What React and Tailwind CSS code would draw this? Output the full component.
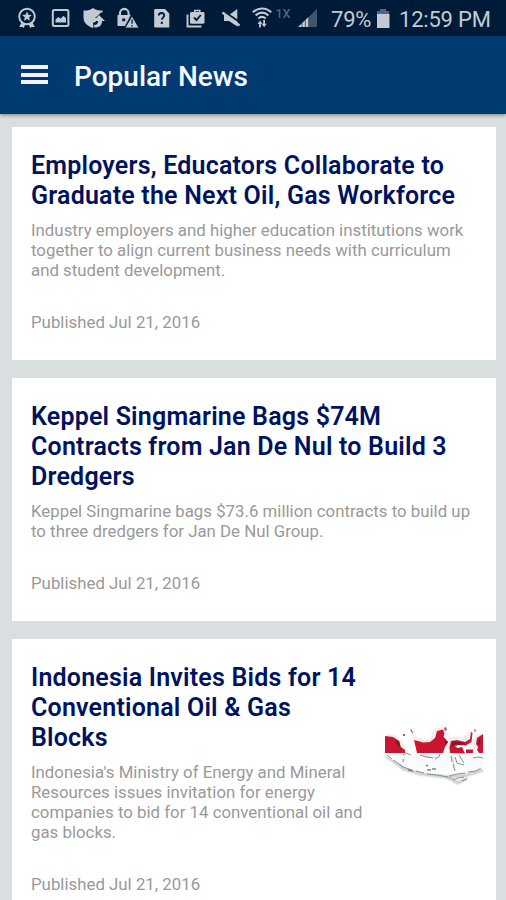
import React from 'react';

const articles = [
  {
    id: 1,
    title: 'Employers, Educators Collaborate to\nGraduate the Next Oil, Gas Workforce',
    summary: 'Industry employers and higher education institutions work\ntogether to align current business needs with curriculum\nand student development.',
    published: 'Jul 21, 2016',
  },
  {
    id: 2,
    title: 'Keppel Singmarine Bags $74M\nContracts from Jan De Nul to Build 3\nDredgers',
    summary: 'Keppel Singmarine bags $73.6 million contracts to build up\nto three dredgers for Jan De Nul Group.',
    published: 'Jul 21, 2016',
  },
  {
    id: 3,
    title: 'Indonesia Invites Bids for 14\nConventional Oil & Gas\nBlocks',
    summary: "Indonesia's Ministry of Energy and Mineral\nResources issues invitation for energy\ncompanies to bid for 14 conventional oil and\ngas blocks.",
    published: 'Jul 21, 2016',
    hasMap: true,
  },
];

const StatusIcons = () => (
  <svg width="320" height="36" viewBox="0 0 320 36" className="shrink-0" fill="#c3cad4">
    {/* Award */}
    <circle cx="27" cy="16.5" r="7.8" fill="none" stroke="#c3cad4" strokeWidth="1.9" />
    <path d="M27 11.5l1.400 3.200 3.500.3-2.700 2.300.8 3.400-3-1.800-3 1.800.8-3.400-2.700-2.300 3.500-.3z" />
    <path d="M21.5 22.5l-2.3 4.6 3.2-.2 1.4 1 1.6-4zM32.5 22.5l2.3 4.6-3.2-.2-1.4 1-1.6-4z" />
    {/* Picture */}
    <rect x="52.8" y="10" width="15.6" height="16" rx="1.5" fill="none" stroke="#c3cad4" strokeWidth="2" />
    <path d="M55.5 22.5v-3l3-2.5 2 1.8 3-3 2.5 2.5v4.2z" />
    {/* Shield with arrow */}
    <path d="M93 8c-3 2.2-6 2.700-9.500 2.500v7c0 5.500 4 8.500 9.500 10.500l.5-.5-.5-5c3.800.3 3.500-3 3.500-4.500h-1.500l6-5.500h1.500v-2C99.500 10.700 96 10.200 93 8z" />
    <path d="M99 15l6 6h-3c0 4-2 6.500-7.500 6.500l-.5-2.500c3 0 4-1.500 4-4h-4.500z" />
    {/* Lock with warning */}
    <path d="M120 15.500v-2.300a4.300 4.300 0 0 1 8.600 0v2.300" fill="none" stroke="#c3cad4" strokeWidth="2.1" />
    <path d="M117.500 15h13.300l-5.800 11h-7.500z" />
    <path d="M132 16l7 12h-14z" stroke="#001b38" strokeWidth=".8" />
    <path d="M131.400 19.500h1.300v4.300h-1.300zM131.400 25h1.300v1.500h-1.300zM122.200 18.500h3v2.800h-3z" fill="#001b38" />
    {/* Unknown file */}
    <path d="M155.500 9h9.500l4.300 4.500v14h-13.800a1.300 1.300 0 0 1-1.300-1.300V10.300A1.300 1.300 0 0 1 155.500 9z" />
    <path d="M158.800 15.500c.2-3.500 5.800-3.200 5.400.2-.2 1.900-2.400 2-2.400 4.100" fill="none" stroke="#001b38" strokeWidth="1.800" />
    <rect x="160.800" y="21.800" width="2" height="2.100" fill="#001b38" />
    {/* Work bag */}
    <path d="M187.500 14.500v12h14" fill="none" stroke="#c3cad4" strokeWidth="1.900" />
    <path d="M194.700 13v-2.500h5.100V13" fill="none" stroke="#c3cad4" strokeWidth="1.500" />
    <rect x="190" y="12" width="14.500" height="11.700" rx="1.400" />
    <path d="M194 17.500l2.500 2.500 4.300-5" fill="none" stroke="#001b38" strokeWidth="1.900" />
    {/* Muted speaker */}
    <path d="M224 15h5l8.300-6v17.500l-8.300-5.500h-5z" />
    <path d="M221.500 10l19 12.500" stroke="#001b38" strokeWidth="2" />
    <path d="M222.500 12.500l17 13" stroke="#c3cad4" strokeWidth="2.400" />
    {/* Wifi */}
    <g fill="none" stroke="#c3cad4" strokeWidth="2.100">
      <path d="M252.800 12.200c5.500-5 12.900-5 18.400 0" />
      <path d="M255.600 15.400c4-3.500 8.800-3.500 12.800 0" />
      <path d="M258.300 18.500c2.400-2 5-2 7.400 0" />
    </g>
    <path d="M257.500 24l2.500-3.500 2.500 3.500h-1.600v3.500h-1.800V24zM261.500 23.700h1.700V20h1.800v3.700h1.700l-2.600 3.600z" />
    <text x="275.500" y="18" fill="#52657a" fontSize="12.500" className="font-['Roboto',sans-serif] font-medium">1X</text>
    {/* Signal */}
    <path d="M317 9v18h-19z" fill="#40566d" />
    <path d="M309 16.600V27h-11z" />
    <path d="M302 21v6M305.300 18v9M308.600 15v12" stroke="#001b38" strokeWidth=".6" />
  </svg>
);

const IndonesiaMap = () => (
  <svg width="99" height="64" viewBox="0 0 99 64" className="mt-[62px] shrink-0">
    <defs>
      <filter id="soft" x="-10%" y="-20%" width="120%" height="140%">
        <feGaussianBlur stdDeviation="1" />
      </filter>
      <filter id="edge">
        <feGaussianBlur stdDeviation=".4" />
      </filter>
    </defs>
    {/* Coast glow and shadow */}
    <g fill="none" stroke="#e9dede" strokeWidth="2" filter="url(#soft)">
      <path d="M1 11l8 0 6 5 6 11M27 4l3 9 8 3 8 0 4-11 9-2 4 9M64 27l1-13 8-1 7 2 5-9M97 9l-7 4v13" />
    </g>
    <g fill="none" stroke="#aeb4b4" strokeWidth="2" filter="url(#soft)">
      <path d="M1 31l11 8 7 5 17 5 26 3 20-2 16-5M19 29l-3 11M66 31l3 14M35 31l18 3M62 52l11 6 9-5" />
    </g>
    <path d="M1 28h19l-2 9 1 4-7-3L1 31zM22 29l12 0 10 3 10 1 4-4h8l3 15-1 4-29-2-19-5zM71 30l16-2 11 1v15l-12 2-8-3-8 1z" fill="#fafbfb" filter="url(#edge)" />
    {/* Red half */}
    <g fill="#cb1732" filter="url(#edge)">
      <path d="M0 11l8 1 6 4 2 6 4 3v3H0z" />
      <path d="M29 15l4 1 5 1.500 7-.5 5-4 2-7 6-1.500 1.500 4-1 3 4.500 5.500-3 5-2 6H32z" />
      <path d="M65 28l-.5-6L66 16l6-1 8 2 5-3 1-7 1.500 1-1 9-5.500 3.500-8-.5-3 1.500 3 1.500 4-1 3 6.500z" />
      <path d="M81 24.500h7V28h-7zM98 9l-6 4-1 6 2 3-1 3 2 3h4z" />
      <path d="M18 9l2 0v2h-2zM25 4l2 1 1 4-1-1zM59 3l2-1 1 3-2 1zM89 4l2 1-1 3z" fill="#b95263" />
    </g>
    <path d="M11 15l3 1 1 4-2 2-1-3-2-1zM60 15l3 2-2 3-1-2zM67 16l7 1 6 1-4 2-6-1-3 3zM94 13l2 3-2 5-1-3zM14 22l3 2-2 1z" fill="#84162a" filter="url(#edge)" />
    {/* Coast detail */}
    <g fill="none" stroke="#7f8787" strokeWidth=".9" filter="url(#edge)">
      <path d="M2 30l5 4M8 35l5 3 5 4M18 30l3-2 5 2M18 34v3M18 42l6 2 3 1M31 46l8 2M42 49l10 1 11 2" />
      <path d="M35 30l6 2 7 1M50 34l4-2 1-3M66 31l1 6M68 39l2 7M70 32l2 6 7 2M79 38l-5-8M88 33l5-1 5 1" />
      <path d="M64 51l8-2 8-1M83 47l8-1 5-3M68 55l5-2 6-1M77 56l5-2" />
      <path d="M42 45h4M47 44h4M41 40l2 1M23 45l5 1" strokeWidth="1.500" />
    </g>
  </svg>
);

const StatusBar = () => (
  <div className="flex h-9 items-center bg-[#001b38] text-[#c3cad4]">
    <StatusIcons />
    <span className="ml-[11px] mt-[3px] w-[43px] whitespace-nowrap text-[22px] leading-none tracking-[-0.2px]">79%</span>
    <svg width="15" height="22" viewBox="0 0 15 22" className="-mt-px ml-[2px] shrink-0">
      <path d="M4 2h6v2h3v4H1V4h3z" fill="#52657a" />
      <path d="M1 7h12.500v14H1z" fill="#c3cad4" />
    </svg>
    <span className="ml-2 mt-[3px] whitespace-nowrap text-[22px] leading-none tracking-[-0.2px]">12:59 PM</span>
  </div>
);

const AppBar = () => (
  <header className="relative flex h-[78px] items-center bg-[#003a70] shadow-[0_1px_4px_rgba(0,0,0,0.45)]">
    <button className="-mt-px ml-[21px] flex w-[27px] flex-col gap-[3.5px]" aria-label="Menu">
      <span className="h-1 w-full bg-[#f5f2ff]" />
      <span className="h-1 w-full bg-[#f5f2ff]" />
      <span className="h-1 w-full bg-[#f5f2ff]" />
    </button>
    <h1 className="ml-[26px] mt-[3px] text-[28px] font-medium text-[#f7f7ff]">Popular News</h1>
  </header>
);

const ArticleCard = ({ article }) => (
  <article className="flex bg-white pt-6 pr-3 pb-7 pl-[19px]">
    <div className="flex-1 whitespace-pre">
      <h2 className="text-[25px] font-semibold leading-[30px] tracking-[0.2px] text-[#00135f]">{article.title}</h2>
      <p className="mt-[9px] text-[16.8px] leading-5 tracking-[0.02px] text-[#999999]">{article.summary}</p>
      <p className="mt-8 text-[16.8px] leading-5 tracking-[0.02px] text-[#999999]">Published {article.published}</p>
    </div>
    {article.hasMap && <IndonesiaMap />}
  </article>
);

export default function App() {
  return (
    <div className="h-[900px] w-[506px] overflow-hidden bg-[#d9dee1] font-['Roboto',sans-serif]">
      <StatusBar />
      <AppBar />
      <main className="flex flex-col gap-[18px] pt-[13px] pr-2.5 pl-3">
        {articles.map((article) => (
          <ArticleCard key={article.id} article={article} />
        ))}
      </main>
    </div>
  );
}
